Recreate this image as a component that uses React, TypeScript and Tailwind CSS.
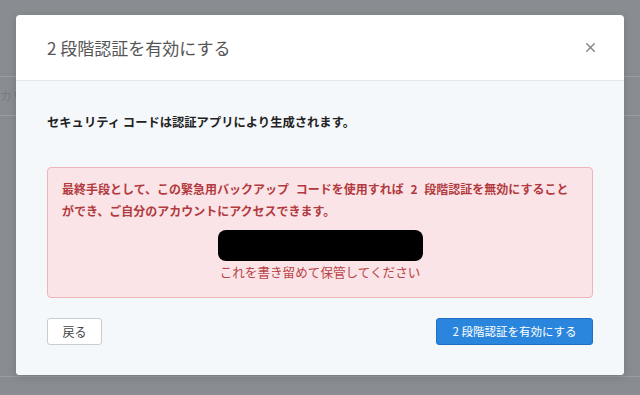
import { X } from 'lucide-react';

export default function App() {
  return (
    <div className="relative h-[395px] w-[640px] overflow-hidden bg-[#898d91] font-['Noto_Sans_CJK_JP','Noto_Sans',sans-serif]">
      {/* Page behind the overlay */}
      <div className="pt-[76px]">
        <div className="flex h-[40px] items-center border-y border-[#999ca0] text-[12px] text-[#777b80]">
          <span>カリ</span>
        </div>
        <div className="h-[261px] border-b border-[#999ca0]" />
      </div>

      {/* Modal */}
      <div className="absolute inset-0 flex justify-center pt-[15px]">
        <div className="h-[360px] w-[608px] overflow-hidden rounded-[4px] bg-white shadow-[0_2px_8px_rgba(0,0,0,0.15)]">
          <div className="flex h-[66px] items-center justify-between border-b border-[#e4e8ed] pl-[31px] pr-[26px]">
            <h2 className="text-[17px] font-normal leading-none text-[#555]">2 段階認証を有効にする</h2>
            <X size={15} strokeWidth={2.4} className="text-[#888]" />
          </div>

          <div className="bg-[#f5f8fb] px-[31px] pb-[30px] pt-[32px]">
            <p className="text-[12.3px] font-bold leading-[18px] text-[#222]">
              セキュリティ コードは認証アプリにより生成されます。
            </p>

            <div className="mt-[36px] flex flex-col items-center rounded-[4px] border border-[#eeb5bc] bg-[#fbe4e7] px-[14px] pb-[16px] pt-[10px]">
              <p className="self-stretch text-[12px] font-bold leading-[22px] text-[#b23a3e] [word-spacing:4px]">
                最終手段として、この緊急用バックアップ コードを使用すれば 2 段階認証を無効にすることができ、ご自分のアカウントにアクセスできます。
              </p>
              <div className="mt-[8px] h-[31px] w-[205px] rounded-[8px] bg-black" />
              <p className="mt-[2px] text-[12.6px] leading-[18px] text-[#b94448]">これを書き留めて保管してください</p>
            </div>

            <div className="mt-[20px] flex items-center justify-between">
              <button className="flex h-[27px] w-[55px] items-center justify-center rounded-[3px] border border-[#c9ccd0] bg-white text-[12px] text-[#444]">
                戻る
              </button>
              <button className="flex h-[27px] w-[157px] items-center justify-center rounded-[3px] border border-[#1f70c4] bg-[#2a86dd] text-[11.5px] text-white">
                2 段階認証を有効にする
              </button>
            </div>
          </div>
        </div>
      </div>
    </div>
  );
}
